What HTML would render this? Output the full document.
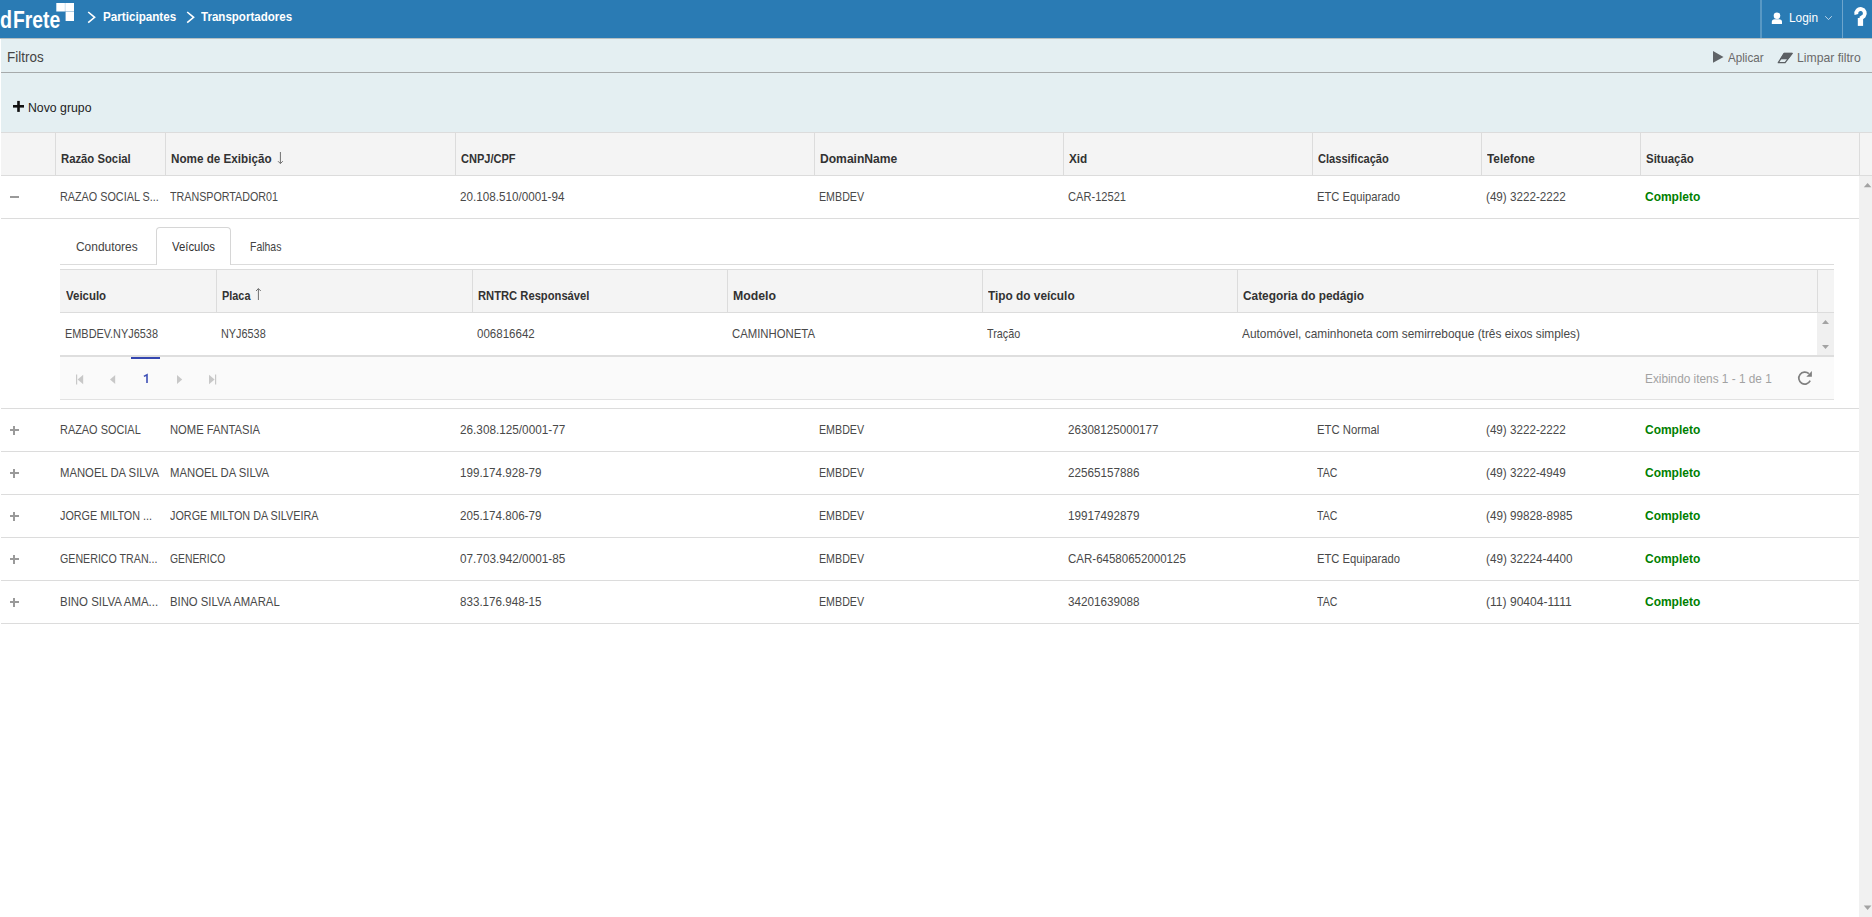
<!DOCTYPE html>
<html><head><meta charset="utf-8"><title>Transportadores</title>
<style>
html,body{margin:0;padding:0;}
body{width:1872px;height:917px;overflow:hidden;position:relative;background:#fff;font-family:"Liberation Sans",sans-serif;}
.r{position:absolute;display:block;}
.t{position:absolute;white-space:nowrap;line-height:1;transform-origin:0 0;}
</style></head><body>
<div class="r" style="left:0px;top:0px;width:1872px;height:38px;background:#2a7bb4;"></div>
<div class="r" style="left:0px;top:38px;width:1872px;height:1px;background:#b5bfc2;"></div>
<div class="t" style="left:13.20px;top:8px;font-size:24px;color:#fff;font-weight:bold;transform:scaleX(0.8027);">Frete</div>
<div class="t" style="left:0.30px;top:8px;font-size:24px;color:#fff;font-weight:bold;transform:scaleX(0.8197);">d</div>
<svg class="r" style="left:50px;top:0px" width="30" height="25"><rect x="6.3" y="3" width="17.7" height="8.5" fill="#fff"/><rect x="15.6" y="11.3" width="8.4" height="9.7" fill="#fff"/><line x1="15.2" y1="3" x2="15.2" y2="11.5" stroke="rgba(42,123,180,0.4)" stroke-width="0.6"/><line x1="15.2" y1="11.5" x2="24" y2="11.5" stroke="rgba(42,123,180,0.4)" stroke-width="0.6"/></svg>
<svg class="r" style="left:86px;top:10px" width="12" height="15"><polyline points="2.2,2 8.6,7.3 2.2,12.6" fill="none" stroke="#fff" stroke-width="1.6"/></svg>
<svg class="r" style="left:184.5px;top:10px" width="12" height="15"><polyline points="2.2,2 8.6,7.3 2.2,12.6" fill="none" stroke="#fff" stroke-width="1.6"/></svg>
<div class="t" style="left:103.00px;top:10px;font-size:13px;color:#fff;font-weight:bold;transform:scaleX(0.8966);">Participantes</div>
<div class="t" style="left:201.00px;top:10px;font-size:13px;color:#fff;font-weight:bold;transform:scaleX(0.8882);">Transportadores</div>
<div class="r" style="left:1760px;top:0px;width:2px;height:38px;background:rgba(255,255,255,0.22);"></div>
<div class="r" style="left:1842px;top:0px;width:1px;height:38px;background:rgba(255,255,255,0.32);"></div>
<svg class="r" style="left:1771px;top:12px" width="12" height="13"><circle cx="6" cy="3.7" r="3.3" fill="#fff"/><path d="M0.8,12.1 L0.8,10.0 Q0.8,7.2 3.8,7.2 L8,7.2 Q11,7.2 11,10.0 L11,12.1 Z" fill="#fff"/></svg>
<div class="t" style="left:1789.00px;top:11px;font-size:13px;color:#fff;transform:scaleX(0.9124);">Login</div>
<svg class="r" style="left:1824px;top:14px" width="10" height="8"><polyline points="1.2,2.2 4.5,5.6 7.8,2.2" fill="none" stroke="#c9dced" stroke-width="0.9"/></svg>
<svg class="r" style="left:1850px;top:4px" width="22" height="26"><path d="M6.4,10.4 A4.3,4.3 0 1 1 13.9,12.0 L10.4,14.6" fill="none" stroke="#fff" stroke-width="3.9"/><rect x="7.8" y="14.0" width="5.3" height="7.9" fill="#fff"/></svg>
<div class="r" style="left:1px;top:39px;width:1871px;height:93px;background:#e4eff2;"></div>
<div class="t" style="left:6.60px;top:50px;font-size:14.6px;color:#444;transform:scaleX(0.9216);">Filtros</div>
<div class="r" style="left:1px;top:72px;width:1871px;height:1px;background:#a6aaab;"></div>
<svg class="r" style="left:1712px;top:50px" width="13" height="14"><polygon points="1,1 11.5,6.9 1,12.8" fill="#606468"/></svg>
<div class="t" style="left:1728.20px;top:51px;font-size:13px;color:#6a6a6a;transform:scaleX(0.8939);">Aplicar</div>
<svg class="r" style="left:1777px;top:51.5px" width="17" height="12"><path d="M7.1,1.3 L15.2,1.3 L8.1,10.7 L1.3,10.7 Z" fill="none" stroke="#5c6064" stroke-width="1.3" stroke-linejoin="round"/><path d="M7.1,1.3 L15.2,1.3 L11.0,7.0 L3.5,7.0 Z" fill="#5c6064" stroke="#5c6064" stroke-width="0.6" stroke-linejoin="round"/></svg>
<div class="t" style="left:1797.30px;top:51px;font-size:13px;color:#6a6a6a;transform:scaleX(0.9378);">Limpar filtro</div>
<svg class="r" style="left:12px;top:100px" width="13" height="13"><rect x="1" y="5.0" width="11" height="2.6" fill="#111"/><rect x="5.2" y="0.9" width="2.6" height="11" fill="#111"/></svg>
<div class="t" style="left:28.30px;top:101px;font-size:13px;color:#222;transform:scaleX(0.9448);">Novo grupo</div>
<div class="r" style="left:1px;top:132px;width:1871px;height:1px;background:#dcdcdc;"></div>
<div class="r" style="left:1px;top:133px;width:1871px;height:42px;background:#f4f4f4;"></div>
<div class="r" style="left:1px;top:175px;width:1871px;height:1px;background:#dcdcdc;"></div>
<div class="r" style="left:55px;top:133px;width:1px;height:42px;background:#dcdcdc;"></div>
<div class="r" style="left:165px;top:133px;width:1px;height:42px;background:#dcdcdc;"></div>
<div class="r" style="left:455px;top:133px;width:1px;height:42px;background:#dcdcdc;"></div>
<div class="r" style="left:814px;top:133px;width:1px;height:42px;background:#dcdcdc;"></div>
<div class="r" style="left:1063px;top:133px;width:1px;height:42px;background:#dcdcdc;"></div>
<div class="r" style="left:1312px;top:133px;width:1px;height:42px;background:#dcdcdc;"></div>
<div class="r" style="left:1481px;top:133px;width:1px;height:42px;background:#dcdcdc;"></div>
<div class="r" style="left:1640px;top:133px;width:1px;height:42px;background:#dcdcdc;"></div>
<div class="r" style="left:1859px;top:133px;width:1px;height:42px;background:#dcdcdc;"></div>
<div class="t" style="left:61.40px;top:152px;font-size:13px;color:#323232;font-weight:bold;transform:scaleX(0.8690);">Razão Social</div>
<div class="t" style="left:171.40px;top:152px;font-size:13px;color:#323232;font-weight:bold;transform:scaleX(0.8983);">Nome de Exibição</div>
<div class="t" style="left:461.40px;top:152px;font-size:13px;color:#323232;font-weight:bold;transform:scaleX(0.8493);">CNPJ/CPF</div>
<div class="t" style="left:820.40px;top:152px;font-size:13px;color:#323232;font-weight:bold;transform:scaleX(0.9305);">DomainName</div>
<div class="t" style="left:1069.40px;top:152px;font-size:13px;color:#323232;font-weight:bold;transform:scaleX(0.9053);">Xid</div>
<div class="t" style="left:1318.40px;top:152px;font-size:13px;color:#323232;font-weight:bold;transform:scaleX(0.8516);">Classificação</div>
<div class="t" style="left:1487.40px;top:152px;font-size:13px;color:#323232;font-weight:bold;transform:scaleX(0.9101);">Telefone</div>
<div class="t" style="left:1646.40px;top:152px;font-size:13px;color:#323232;font-weight:bold;transform:scaleX(0.8818);">Situação</div>
<svg class="r" style="left:276px;top:151px" width="8" height="14"><line x1="4.4" y1="1" x2="4.4" y2="12.5" stroke="#707070" stroke-width="1"/><polyline points="2.0,10.2 4.4,12.6 6.8,10.2" fill="none" stroke="#707070" stroke-width="1"/></svg>
<div class="r" style="left:10px;top:196px;width:9px;height:2px;background:#9a9a9a;"></div>
<div class="t" style="left:60.40px;top:190px;font-size:13px;color:#494949;transform:scaleX(0.8316);">RAZAO SOCIAL S...</div>
<div class="t" style="left:170.40px;top:190px;font-size:13px;color:#494949;transform:scaleX(0.8246);">TRANSPORTADOR01</div>
<div class="t" style="left:460.40px;top:190px;font-size:13px;color:#494949;transform:scaleX(0.8977);">20.108.510/0001-94</div>
<div class="t" style="left:819.40px;top:190px;font-size:13px;color:#494949;transform:scaleX(0.8211);">EMBDEV</div>
<div class="t" style="left:1068.40px;top:190px;font-size:13px;color:#494949;transform:scaleX(0.8539);">CAR-12521</div>
<div class="t" style="left:1317.40px;top:190px;font-size:13px;color:#494949;transform:scaleX(0.8623);">ETC Equiparado</div>
<div class="t" style="left:1486.40px;top:190px;font-size:13px;color:#494949;transform:scaleX(0.8974);">(49) 3222-2222</div>
<div class="t" style="left:1645.00px;top:190px;font-size:13px;color:#008000;font-weight:bold;transform:scaleX(0.9211);">Completo</div>
<div class="r" style="left:1px;top:218px;width:1858px;height:1px;background:#dcdcdc;"></div>
<div class="r" style="left:60px;top:264px;width:1774px;height:1px;background:#dcdcdc;"></div>
<div class="r" style="left:156px;top:227px;width:75px;height:38px;background:#fff;border:1px solid #d6d6d6;border-bottom:none;border-radius:4px 4px 0 0;box-sizing:border-box"></div>
<div class="t" style="left:76.10px;top:240px;font-size:13px;color:#444;transform:scaleX(0.9180);">Condutores</div>
<div class="t" style="left:172.00px;top:240px;font-size:13px;color:#333;transform:scaleX(0.8730);">Veículos</div>
<div class="t" style="left:249.60px;top:240px;font-size:13px;color:#444;transform:scaleX(0.8051);">Falhas</div>
<div class="r" style="left:60px;top:269px;width:1774px;height:1px;background:#dcdcdc;"></div>
<div class="r" style="left:60px;top:270px;width:1774px;height:42px;background:#f4f4f4;"></div>
<div class="r" style="left:60px;top:312px;width:1774px;height:1px;background:#dcdcdc;"></div>
<div class="r" style="left:216px;top:270px;width:1px;height:42px;background:#dcdcdc;"></div>
<div class="r" style="left:472px;top:270px;width:1px;height:42px;background:#dcdcdc;"></div>
<div class="r" style="left:727px;top:270px;width:1px;height:42px;background:#dcdcdc;"></div>
<div class="r" style="left:982px;top:270px;width:1px;height:42px;background:#dcdcdc;"></div>
<div class="r" style="left:1237px;top:270px;width:1px;height:42px;background:#dcdcdc;"></div>
<div class="r" style="left:1817px;top:270px;width:1px;height:42px;background:#dcdcdc;"></div>
<div class="t" style="left:65.50px;top:289px;font-size:13px;color:#323232;font-weight:bold;transform:scaleX(0.8813);">Veiculo</div>
<div class="t" style="left:221.50px;top:289px;font-size:13px;color:#323232;font-weight:bold;transform:scaleX(0.8368);">Placa</div>
<div class="t" style="left:477.50px;top:289px;font-size:13px;color:#323232;font-weight:bold;transform:scaleX(0.8617);">RNTRC Responsável</div>
<div class="t" style="left:732.50px;top:289px;font-size:13px;color:#323232;font-weight:bold;transform:scaleX(0.9451);">Modelo</div>
<div class="t" style="left:987.50px;top:289px;font-size:13px;color:#323232;font-weight:bold;transform:scaleX(0.9107);">Tipo do veículo</div>
<div class="t" style="left:1242.50px;top:289px;font-size:13px;color:#323232;font-weight:bold;transform:scaleX(0.9110);">Categoria do pedágio</div>
<svg class="r" style="left:254px;top:287px" width="8" height="14"><line x1="4.4" y1="1.6" x2="4.4" y2="13" stroke="#707070" stroke-width="1"/><polyline points="2.0,4.0 4.4,1.6 6.8,4.0" fill="none" stroke="#707070" stroke-width="1"/></svg>
<div class="t" style="left:65.00px;top:327px;font-size:13px;color:#494949;transform:scaleX(0.8392);">EMBDEV.NYJ6538</div>
<div class="t" style="left:221.00px;top:327px;font-size:13px;color:#494949;transform:scaleX(0.8356);">NYJ6538</div>
<div class="t" style="left:477.00px;top:327px;font-size:13px;color:#494949;transform:scaleX(0.8868);">006816642</div>
<div class="t" style="left:732.00px;top:327px;font-size:13px;color:#494949;transform:scaleX(0.8722);">CAMINHONETA</div>
<div class="t" style="left:987.00px;top:327px;font-size:13px;color:#494949;transform:scaleX(0.8305);">Tração</div>
<div class="t" style="left:1242.00px;top:327px;font-size:13px;color:#494949;transform:scaleX(0.9135);">Automóvel, caminhoneta com semirreboque (três eixos simples)</div>
<div class="r" style="left:1817px;top:313px;width:17px;height:42px;background:#f0f0f0;"></div>
<svg class="r" style="left:1817px;top:313px" width="17" height="42"><polygon points="5,11 8.5,7 12,11" fill="#a3a3a3"/><polygon points="5,32 8.5,36 12,32" fill="#a3a3a3"/></svg>
<div class="r" style="left:60px;top:355px;width:1774px;height:2px;background:#dedede;"></div>
<div class="r" style="left:60px;top:357px;width:1774px;height:42px;background:#fafafa;"></div>
<div class="r" style="left:60px;top:399px;width:1774px;height:1px;background:#e2e2e2;"></div>
<div class="r" style="left:131px;top:357px;width:29px;height:2.2px;background:#3446b0;"></div>
<svg class="r" style="left:70px;top:370.5px" width="160" height="18"><rect x="6" y="3.5" width="1.2" height="10" fill="#c8c8c8"/><polygon points="13.2,3.7 7.6,8.5 13.2,13.3" fill="#c8c8c8"/><polygon points="45.2,4 40,8.5 45.2,13" fill="#c8c8c8"/><polygon points="107,4 112.2,8.5 107,13" fill="#c8c8c8"/><polygon points="139,3.7 144.6,8.5 139,13.3" fill="#c8c8c8"/><rect x="145" y="3.5" width="1.2" height="10" fill="#c8c8c8"/></svg>
<svg class="r" style="left:142px;top:372px" width="8" height="13"><path d="M1.9,4.4 L5.0,2.8 L5.0,11" fill="none" stroke="#3d4fb6" stroke-width="1.6"/></svg>
<div class="t" style="left:1645.00px;top:372px;font-size:13px;color:#a2a2a2;transform:scaleX(0.9090);">Exibindo itens 1 - 1 de 1</div>
<svg class="r" style="left:1796px;top:369px" width="18" height="18"><path d="M12.9,4.7 A6,6 0 1 0 14.2,11.7" fill="none" stroke="#808080" stroke-width="1.7"/><polygon points="10.3,7.8 15.9,7.8 15.9,2.0" fill="#808080"/></svg>
<div class="r" style="left:1px;top:408px;width:1858px;height:1px;background:#dcdcdc;"></div>
<div class="r" style="left:10px;top:429px;width:9px;height:2px;background:#9a9a9a;"></div>
<div class="r" style="left:13px;top:426px;width:2px;height:9px;background:#9a9a9a;"></div>
<div class="t" style="left:60.40px;top:423px;font-size:13px;color:#494949;transform:scaleX(0.8400);">RAZAO SOCIAL</div>
<div class="t" style="left:170.40px;top:423px;font-size:13px;color:#494949;transform:scaleX(0.8620);">NOME FANTASIA</div>
<div class="t" style="left:460.40px;top:423px;font-size:13px;color:#494949;transform:scaleX(0.9045);">26.308.125/0001-77</div>
<div class="t" style="left:819.40px;top:423px;font-size:13px;color:#494949;transform:scaleX(0.8211);">EMBDEV</div>
<div class="t" style="left:1068.40px;top:423px;font-size:13px;color:#494949;transform:scaleX(0.8942);">26308125000177</div>
<div class="t" style="left:1317.40px;top:423px;font-size:13px;color:#494949;transform:scaleX(0.8699);">ETC Normal</div>
<div class="t" style="left:1486.40px;top:423px;font-size:13px;color:#494949;transform:scaleX(0.8974);">(49) 3222-2222</div>
<div class="t" style="left:1645.00px;top:423px;font-size:13px;color:#008000;font-weight:bold;transform:scaleX(0.9211);">Completo</div>
<div class="r" style="left:1px;top:451px;width:1858px;height:1px;background:#dcdcdc;"></div>
<div class="r" style="left:10px;top:472px;width:9px;height:2px;background:#9a9a9a;"></div>
<div class="r" style="left:13px;top:469px;width:2px;height:9px;background:#9a9a9a;"></div>
<div class="t" style="left:60.40px;top:466px;font-size:13px;color:#494949;transform:scaleX(0.8688);">MANOEL DA SILVA</div>
<div class="t" style="left:170.40px;top:466px;font-size:13px;color:#494949;transform:scaleX(0.8706);">MANOEL DA SILVA</div>
<div class="t" style="left:460.40px;top:466px;font-size:13px;color:#494949;transform:scaleX(0.8939);">199.174.928-79</div>
<div class="t" style="left:819.40px;top:466px;font-size:13px;color:#494949;transform:scaleX(0.8211);">EMBDEV</div>
<div class="t" style="left:1068.40px;top:466px;font-size:13px;color:#494949;transform:scaleX(0.8987);">22565157886</div>
<div class="t" style="left:1317.40px;top:466px;font-size:13px;color:#494949;transform:scaleX(0.8112);">TAC</div>
<div class="t" style="left:1486.40px;top:466px;font-size:13px;color:#494949;transform:scaleX(0.8974);">(49) 3222-4949</div>
<div class="t" style="left:1645.00px;top:466px;font-size:13px;color:#008000;font-weight:bold;transform:scaleX(0.9211);">Completo</div>
<div class="r" style="left:1px;top:494px;width:1858px;height:1px;background:#dcdcdc;"></div>
<div class="r" style="left:10px;top:515px;width:9px;height:2px;background:#9a9a9a;"></div>
<div class="r" style="left:13px;top:512px;width:2px;height:9px;background:#9a9a9a;"></div>
<div class="t" style="left:60.40px;top:509px;font-size:13px;color:#494949;transform:scaleX(0.8306);">JORGE MILTON ...</div>
<div class="t" style="left:170.40px;top:509px;font-size:13px;color:#494949;transform:scaleX(0.8320);">JORGE MILTON DA SILVEIRA</div>
<div class="t" style="left:460.40px;top:509px;font-size:13px;color:#494949;transform:scaleX(0.8939);">205.174.806-79</div>
<div class="t" style="left:819.40px;top:509px;font-size:13px;color:#494949;transform:scaleX(0.8211);">EMBDEV</div>
<div class="t" style="left:1068.40px;top:509px;font-size:13px;color:#494949;transform:scaleX(0.8987);">19917492879</div>
<div class="t" style="left:1317.40px;top:509px;font-size:13px;color:#494949;transform:scaleX(0.8112);">TAC</div>
<div class="t" style="left:1486.40px;top:509px;font-size:13px;color:#494949;transform:scaleX(0.8987);">(49) 99828-8985</div>
<div class="t" style="left:1645.00px;top:509px;font-size:13px;color:#008000;font-weight:bold;transform:scaleX(0.9211);">Completo</div>
<div class="r" style="left:1px;top:537px;width:1858px;height:1px;background:#dcdcdc;"></div>
<div class="r" style="left:10px;top:558px;width:9px;height:2px;background:#9a9a9a;"></div>
<div class="r" style="left:13px;top:555px;width:2px;height:9px;background:#9a9a9a;"></div>
<div class="t" style="left:60.40px;top:552px;font-size:13px;color:#494949;transform:scaleX(0.8197);">GENERICO TRAN...</div>
<div class="t" style="left:170.40px;top:552px;font-size:13px;color:#494949;transform:scaleX(0.7959);">GENERICO</div>
<div class="t" style="left:460.40px;top:552px;font-size:13px;color:#494949;transform:scaleX(0.9045);">07.703.942/0001-85</div>
<div class="t" style="left:819.40px;top:552px;font-size:13px;color:#494949;transform:scaleX(0.8211);">EMBDEV</div>
<div class="t" style="left:1068.40px;top:552px;font-size:13px;color:#494949;transform:scaleX(0.8858);">CAR-64580652000125</div>
<div class="t" style="left:1317.40px;top:552px;font-size:13px;color:#494949;transform:scaleX(0.8623);">ETC Equiparado</div>
<div class="t" style="left:1486.40px;top:552px;font-size:13px;color:#494949;transform:scaleX(0.8987);">(49) 32224-4400</div>
<div class="t" style="left:1645.00px;top:552px;font-size:13px;color:#008000;font-weight:bold;transform:scaleX(0.9211);">Completo</div>
<div class="r" style="left:1px;top:580px;width:1858px;height:1px;background:#dcdcdc;"></div>
<div class="r" style="left:10px;top:601px;width:9px;height:2px;background:#9a9a9a;"></div>
<div class="r" style="left:13px;top:598px;width:2px;height:9px;background:#9a9a9a;"></div>
<div class="t" style="left:60.40px;top:595px;font-size:13px;color:#494949;transform:scaleX(0.8800);">BINO SILVA AMA...</div>
<div class="t" style="left:170.40px;top:595px;font-size:13px;color:#494949;transform:scaleX(0.8708);">BINO SILVA AMARAL</div>
<div class="t" style="left:460.40px;top:595px;font-size:13px;color:#494949;transform:scaleX(0.8939);">833.176.948-15</div>
<div class="t" style="left:819.40px;top:595px;font-size:13px;color:#494949;transform:scaleX(0.8211);">EMBDEV</div>
<div class="t" style="left:1068.40px;top:595px;font-size:13px;color:#494949;transform:scaleX(0.8987);">34201639088</div>
<div class="t" style="left:1317.40px;top:595px;font-size:13px;color:#494949;transform:scaleX(0.8112);">TAC</div>
<div class="t" style="left:1486.40px;top:595px;font-size:13px;color:#494949;transform:scaleX(0.9285);">(11) 90404-1111</div>
<div class="t" style="left:1645.00px;top:595px;font-size:13px;color:#008000;font-weight:bold;transform:scaleX(0.9211);">Completo</div>
<div class="r" style="left:1px;top:623px;width:1858px;height:1px;background:#dcdcdc;"></div>
<div class="r" style="left:1859px;top:176px;width:13px;height:741px;background:#f1f1f1;"></div>
<svg class="r" style="left:1859px;top:176px" width="13" height="741"><polygon points="4.8,11.2 8.6,7 12.4,11.2" fill="#a3a3a3"/><polygon points="4.8,729.6 8.6,734 12.4,729.6" fill="#a3a3a3"/></svg>
</body></html>
